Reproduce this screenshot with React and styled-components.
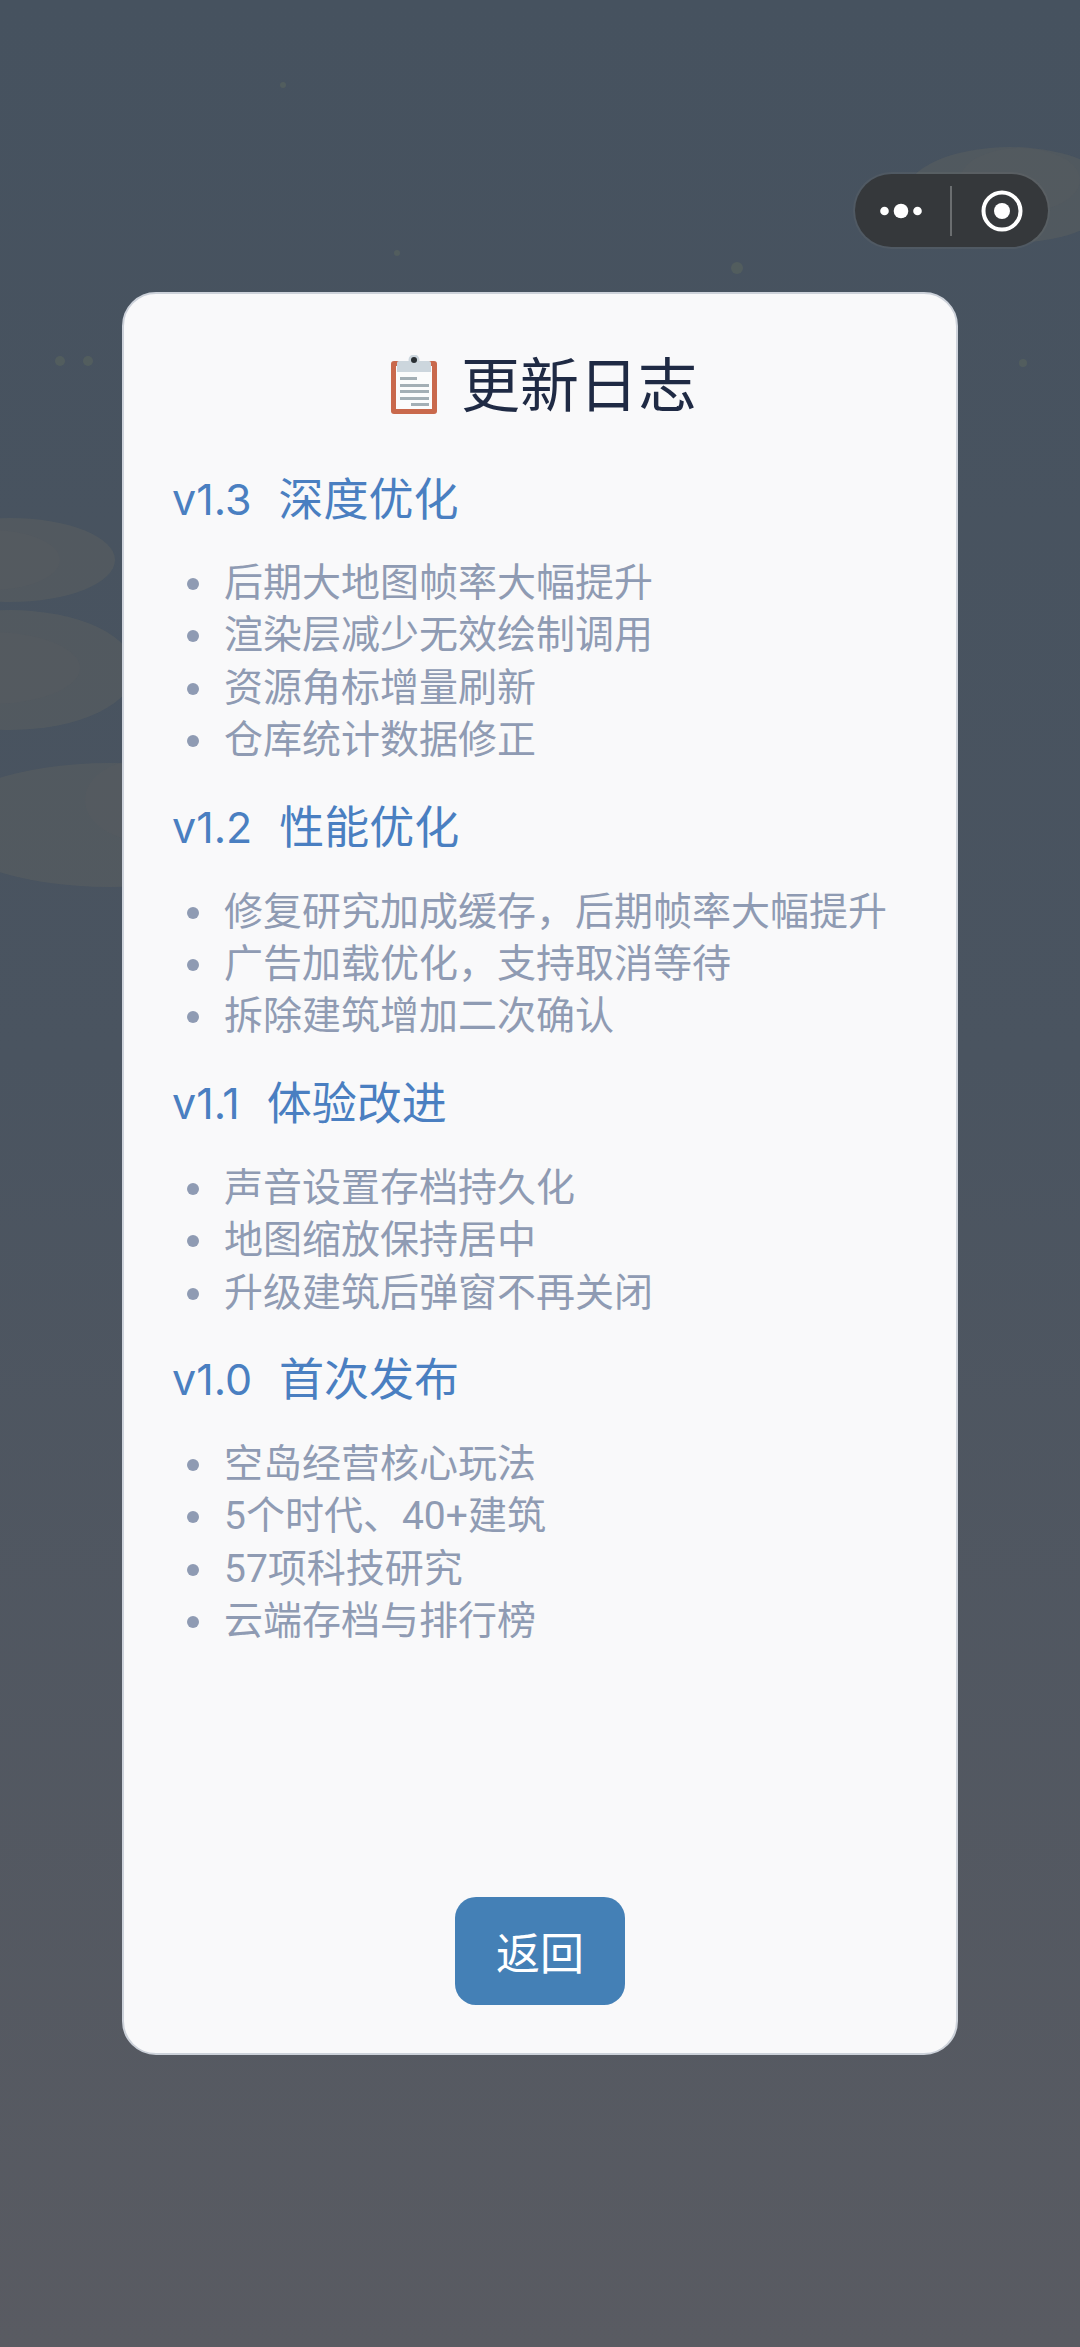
import React from "react";
import styled, { createGlobalStyle } from "styled-components";

const GlobalStyle = createGlobalStyle`
  html, body {
    margin: 0;
    padding: 0;
  }
  body {
    font-family: Inter, "Noto Sans CJK SC", sans-serif;
  }
  * {
    box-sizing: border-box;
  }
`;

const changelog = [
  {
    version: "v1.3",
    name: "深度优化",
    items: ["后期大地图帧率大幅提升", "渲染层减少无效绘制调用", "资源角标增量刷新", "仓库统计数据修正"],
  },
  {
    version: "v1.2",
    name: "性能优化",
    items: ["修复研究加成缓存，后期帧率大幅提升", "广告加载优化，支持取消等待", "拆除建筑增加二次确认"],
  },
  {
    version: "v1.1",
    name: "体验改进",
    items: ["声音设置存档持久化", "地图缩放保持居中", "升级建筑后弹窗不再关闭"],
  },
  {
    version: "v1.0",
    name: "首次发布",
    items: ["空岛经营核心玩法", "5个时代、40+建筑", "57项科技研究", "云端存档与排行榜"],
  },
];

const Scenery = () => (
  <SceneSvg viewBox="0 0 1080 2347" aria-hidden="true">
    <g fill="#6d6a60" fillOpacity="0.28">
      <ellipse cx="10" cy="560" rx="105" ry="42" />
      <ellipse cx="10" cy="670" rx="125" ry="60" />
      <ellipse cx="110" cy="825" rx="170" ry="62" />
      <ellipse cx="1010" cy="195" rx="105" ry="48" />
    </g>
    <g fill="#6d6a60" fillOpacity="0.08">
      <ellipse cx="-10" cy="560" rx="70" ry="30" />
      <ellipse cx="-10" cy="668" rx="90" ry="36" />
      <ellipse cx="150" cy="800" rx="65" ry="42" />
      <ellipse cx="1020" cy="180" rx="60" ry="32" />
    </g>
    <g fill="#5f6b5e" fillOpacity="0.45">
      <circle cx="737" cy="268" r="6" />
      <circle cx="60" cy="361" r="5" />
      <circle cx="88" cy="361" r="5" />
      <circle cx="1023" cy="363" r="4" />
      <circle cx="283" cy="85" r="3" />
      <circle cx="397" cy="253" r="3" />
    </g>
  </SceneSvg>
);

const ClipboardIcon = () => (
  <svg width="50" height="60" viewBox="0 0 50 60" aria-hidden="true">
    <rect x="2" y="6" width="46" height="53" rx="3" fill="#c9694c" />
    <rect x="7" y="11" width="36" height="43" fill="#fbfcfc" />
    <path d="M10 6 h30 a2 2 0 0 1 2 2 v9 h-34 v-9 a2 2 0 0 1 2 -2 z" fill="#ccd6dd" />
    <circle cx="25" cy="5" r="5.5" fill="#ccd6dd" />
    <circle cx="25" cy="5" r="3" fill="#292f33" />
    <g fill="#a3afb5">
      <rect x="11" y="22" width="17" height="3" />
      <rect x="11" y="29" width="29" height="3" />
      <rect x="11" y="35" width="29" height="3" />
      <rect x="11" y="42" width="29" height="3" />
      <rect x="22" y="48" width="18" height="3" />
    </g>
  </svg>
);

const MoreIcon = () => (
  <svg width="42" height="16" viewBox="0 0 42 16" aria-hidden="true">
    <circle cx="4.5" cy="8" r="4.3" fill="#fff" />
    <circle cx="21" cy="8" r="7.3" fill="#fff" />
    <circle cx="37.5" cy="8" r="4.3" fill="#fff" />
  </svg>
);

const TargetIcon = () => (
  <svg width="42" height="42" viewBox="0 0 42 42" aria-hidden="true">
    <circle cx="21" cy="21" r="18.5" fill="none" stroke="#fff" strokeWidth="4" />
    <circle cx="21" cy="21" r="8" fill="#fff" />
  </svg>
);

export default function App() {
  return (
    <Page>
      <GlobalStyle />
      <Scenery />
      <Capsule>
        <CapsuleSlot $end="3px">
          <MoreIcon />
        </CapsuleSlot>
        <CapsuleDivider />
        <CapsuleSlot $start="5px">
          <TargetIcon />
        </CapsuleSlot>
      </Capsule>
      <Card>
        <Title>
          <ClipboardIcon />
          <span>更新日志</span>
        </Title>
        <Log>
          {changelog.map((entry) => (
            <Section key={entry.version}>
              <Heading>
                <Version>{entry.version}</Version>
                {entry.name}
              </Heading>
              <List>
                {entry.items.map((item) => (
                  <Item key={item}>{item}</Item>
                ))}
              </List>
            </Section>
          ))}
        </Log>
        <BackButton type="button">返回</BackButton>
      </Card>
    </Page>
  );
}

const Page = styled.div`
  position: relative;
  width: 1080px;
  height: 2347px;
  overflow: hidden;
  padding: 292px 122px 0;
  background: linear-gradient(180deg, #46525f 0%, #4a5460 45%, #595b62 100%);
`;

const SceneSvg = styled.svg`
  position: absolute;
  top: 0;
  left: 0;
  width: 1080px;
  height: 2347px;
`;

const Capsule = styled.div`
  position: absolute;
  top: 174px;
  left: 855px;
  width: 193px;
  height: 73px;
  display: flex;
  align-items: center;
  border-radius: 37px;
  background: #35383b;
  box-shadow: 0 0 0 2px rgba(120, 122, 124, 0.18);
`;

const CapsuleSlot = styled.div`
  flex: 1;
  display: flex;
  align-items: center;
  justify-content: center;
  padding-left: ${({ $start }) => $start || 0};
  padding-right: ${({ $end }) => $end || 0};
`;

const CapsuleDivider = styled.div`
  width: 2px;
  height: 50px;
  background: #6b6e70;
`;

const Card = styled.div`
  position: relative;
  width: 836px;
  height: 1763px;
  display: flex;
  flex-direction: column;
  padding: 0 48px;
  background: #f9f9fa;
  border: 2px solid #cdd2da;
  border-radius: 34px;
`;

const Title = styled.h1`
  display: flex;
  align-items: center;
  justify-content: center;
  gap: 22px;
  height: 122px;
  margin: 30px 0 21px 6px;
  font-size: 59px;
  font-weight: 400;
  line-height: 1;
  color: #1f2a44;
`;

const Log = styled.div`
  display: flex;
  flex-direction: column;
  gap: 29px;
`;

const Section = styled.section`
  display: flex;
  flex-direction: column;
`;

const Heading = styled.h2`
  margin: 0 0 26px;
  height: 64px;
  display: flex;
  align-items: center;
  font-size: 45px;
  font-weight: 400;
  line-height: 1;
  color: #4a7fc1;
`;

const Version = styled.span`
  margin-right: 27px;
  font-size: 43px;
`;

const List = styled.ul`
  list-style: none;
  margin: 0;
  padding: 0;
`;

const Item = styled.li`
  position: relative;
  height: 52.4px;
  padding-left: 52px;
  font-family: Roboto, "Noto Sans CJK SC", sans-serif;
  font-size: 39px;
  line-height: 52px;
  color: #8f9bb3;

  &::before {
    content: "";
    position: absolute;
    left: 15px;
    top: 21px;
    width: 12px;
    height: 12px;
    border-radius: 50%;
    background: #8f9bb3;
  }
`;

const BackButton = styled.button`
  align-self: center;
  margin-top: auto;
  margin-bottom: 48px;
  width: 170px;
  height: 108px;
  padding: 0;
  border: none;
  border-radius: 21px;
  background: #4480b6;
  color: #fff;
  font-family: inherit;
  font-size: 44px;
`;
